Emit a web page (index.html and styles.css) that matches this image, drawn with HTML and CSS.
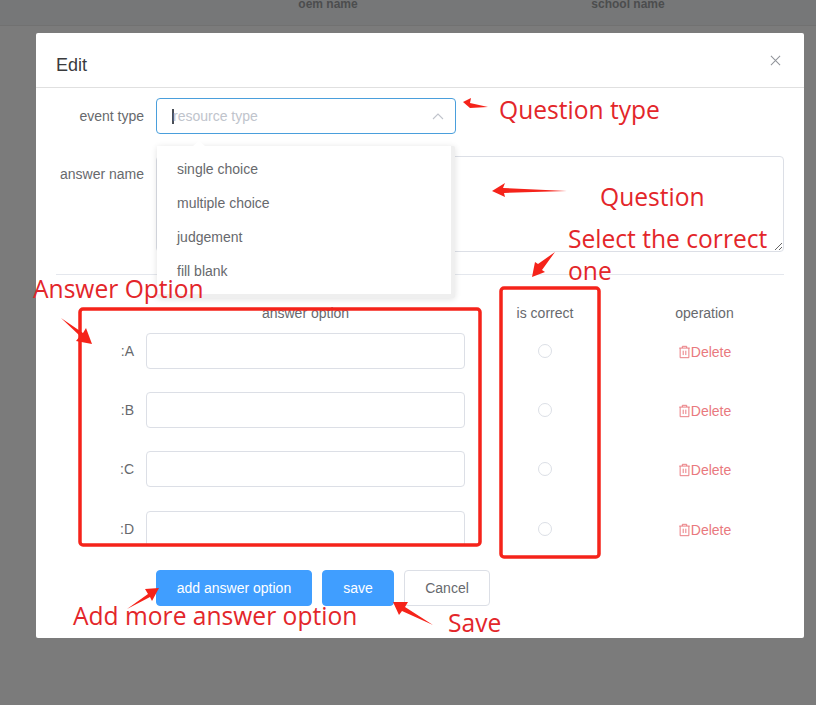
FILE: index.html
```html
<!DOCTYPE html>
<html lang="en">
<head>
    <meta charset="UTF-8">
    <title>Edit</title>
    <link rel="stylesheet" href="styles.css">
</head>
<body>
    <!-- Page behind the dialog -->
    <div class="page-head">
        <div class="page-cell">oem name</div>
        <div class="page-cell">school name</div>
    </div>

    <!-- Dialog -->
    <div class="dialog">
        <div class="dialog-header">
            <span class="dialog-title">Edit</span>
            <svg class="dialog-close" viewBox="0 0 12 12"><path d="M1 1L11 11M11 1L1 11"/></svg>
        </div>
        <div class="dialog-body">
            <div class="form-row">
                <label class="form-label">event type</label>
                <div class="select">
                    <span class="select-caret"></span>
                    <span class="select-placeholder">resource type</span>
                    <svg class="select-arrow" viewBox="0 0 12 8"><path d="M1 7L6 2L11 7"/></svg>
                </div>
            </div>
            <div class="form-row">
                <label class="form-label">answer name</label>
                <textarea class="question-input"></textarea>
            </div>
            <div class="divider"></div>

            <div class="option-table">
                <div class="option-head">
                    <div></div>
                    <div class="cell-center">answer option</div>
                    <div class="cell-center">is correct</div>
                    <div class="cell-center">operation</div>
                </div>
                <div class="option-row">
                    <div class="option-letter">:A</div>
                    <input class="option-input" type="text">
                    <div class="radio-cell"><span class="radio"></span></div>
                    <div class="delete-cell"><svg class="trash" viewBox="0 0 14 16"><path d="M1 3.5H13M4.5 3.5V1.5H9.5V3.5M2 3.5V14.5H12V3.5M5.5 6.5V11.5M8.5 6.5V11.5"/></svg>Delete</div>
                </div>
                <div class="option-row">
                    <div class="option-letter">:B</div>
                    <input class="option-input" type="text">
                    <div class="radio-cell"><span class="radio"></span></div>
                    <div class="delete-cell"><svg class="trash" viewBox="0 0 14 16"><path d="M1 3.5H13M4.5 3.5V1.5H9.5V3.5M2 3.5V14.5H12V3.5M5.5 6.5V11.5M8.5 6.5V11.5"/></svg>Delete</div>
                </div>
                <div class="option-row">
                    <div class="option-letter">:C</div>
                    <input class="option-input" type="text">
                    <div class="radio-cell"><span class="radio"></span></div>
                    <div class="delete-cell"><svg class="trash" viewBox="0 0 14 16"><path d="M1 3.5H13M4.5 3.5V1.5H9.5V3.5M2 3.5V14.5H12V3.5M5.5 6.5V11.5M8.5 6.5V11.5"/></svg>Delete</div>
                </div>
                <div class="option-row">
                    <div class="option-letter">:D</div>
                    <input class="option-input" type="text">
                    <div class="radio-cell"><span class="radio"></span></div>
                    <div class="delete-cell"><svg class="trash" viewBox="0 0 14 16"><path d="M1 3.5H13M4.5 3.5V1.5H9.5V3.5M2 3.5V14.5H12V3.5M5.5 6.5V11.5M8.5 6.5V11.5"/></svg>Delete</div>
                </div>
            </div>

            <div class="button-row">
                <button class="btn btn-primary btn-add">add answer option</button>
                <button class="btn btn-primary btn-save">save</button>
                <button class="btn btn-cancel">Cancel</button>
            </div>
        </div>
    </div>

    <!-- Select dropdown -->
    <div class="dropdown">
        <div class="dropdown-list">
            <div class="dropdown-item">single choice</div>
            <div class="dropdown-item">multiple choice</div>
            <div class="dropdown-item">judgement</div>
            <div class="dropdown-item">fill blank</div>
        </div>
    </div>

    <!-- Red annotations drawn over the screenshot -->
    <svg class="marks" viewBox="0 0 816 705">
        <rect class="mark-box" x="80" y="309" width="400" height="236" rx="3"/>
        <rect class="mark-box" x="501" y="288" width="98" height="269" rx="3"/>
        <polygon class="mark-arrow" points="463,102 471,98 470,103 488,107 470,108"/>
        <polygon class="mark-arrow" points="492,191 505,183 503,188 567,191 504,193 505,197"/>
        <polygon class="mark-arrow" points="555,252 538,264 535,262 532,277 545,272 542,270"/>
        <polygon class="mark-arrow" points="61,318 83,333 86,328 92,344 76,341 80,336"/>
        <polygon class="mark-arrow" points="127,609 148,594 145,589 159,588 152,601 150,597"/>
        <polygon class="mark-arrow" points="433,625 405,607 408,602 393,602 399,615 402,611"/>
    </svg>
    <div class="note note-type">Question type</div>
    <div class="note note-question">Question</div>
    <div class="note note-correct">Select the correct<br>one</div>
    <div class="note note-option">Answer Option</div>
    <div class="note note-add">Add more answer option</div>
    <div class="note note-save">Save</div>
</body>
</html>
```

FILE: styles.css
```css
* {
    margin: 0;
    padding: 0;
    box-sizing: border-box;
}

body {
    position: relative;
    width: 816px;
    height: 705px;
    overflow: hidden;
    background: #7b7b7b;
    color: #67696d;
    font-family: "Liberation Sans", Arial, sans-serif;
    font-size: 14px;
}

/* Page behind the dialog */
.page-head {
    display: flex;
    height: 26px;
    padding-left: 178px;
    background: #767778;
    border-bottom: 1px solid #717171;
}

.page-cell {
    width: 300px;
    margin-top: -5px;
    line-height: 18px;
    text-align: center;
    font-size: 12px;
    font-weight: bold;
    color: #4c4d4e;
}

/* Dialog */
.dialog {
    width: 768px;
    height: 605px;
    margin: 7px 0 0 36px;
    background: #fff;
    border-radius: 2px;
}

.dialog-header {
    display: flex;
    justify-content: space-between;
    height: 55px;
    padding: 20px 23px 0 20px;
    border-bottom: 1px solid #e0e0e0;
}

.dialog-title {
    font-size: 18px;
    line-height: 24px;
    color: #3a3b3d;
}

.dialog-close {
    width: 11px;
    height: 11px;
    margin-top: 2px;
    fill: none;
    stroke: #909399;
    stroke-width: 1.1;
}

.dialog-body {
    padding: 10px 20px 0;
}

.form-row {
    display: flex;
    margin-bottom: 22px;
}

.form-label {
    width: 100px;
    padding-right: 12px;
    text-align: right;
    line-height: 36px;
}

.select {
    position: relative;
    display: flex;
    align-items: center;
    width: 300px;
    height: 36px;
    padding: 0 15px;
    border: 1px solid #4a9fdc;
    border-radius: 4px;
}

.select-caret {
    width: 2px;
    height: 15px;
    margin-right: -1px;
    background: #4a4f57;
}

.select-placeholder {
    color: #c0c4cc;
}

.select-arrow {
    position: absolute;
    top: 13px;
    right: 11px;
    width: 12px;
    height: 8px;
    fill: none;
    stroke: #c0c4cc;
    stroke-width: 1.1;
}

.question-input {
    flex: 1;
    height: 96px;
    border: 1px solid #dcdfe6;
    border-radius: 4px;
    outline: none;
    display: block;
}

.divider {
    border-top: 1px solid #e4e7ed;
}

/* Answer options */
.option-table {
    height: 269px;
    padding-top: 28px;
    overflow: hidden;
}

.option-head,
.option-row {
    display: grid;
    grid-template-columns: 90px 319px 160px 159px;
    align-items: center;
}

.option-head {
    height: 20px;
    margin-bottom: 10px;
}

.option-row {
    height: 36px;
    margin-bottom: 23.2px;
}

.cell-center {
    text-align: center;
}

.option-letter {
    padding-right: 12px;
    text-align: right;
}

.option-input {
    height: 36px;
    border: 1px solid #dcdfe6;
    border-radius: 4px;
    outline: none;
}

.radio-cell {
    display: flex;
    justify-content: center;
}

.radio {
    width: 14px;
    height: 14px;
    border: 1px solid #dcdfe6;
    border-radius: 50%;
}

.delete-cell {
    display: flex;
    justify-content: center;
    align-items: center;
    padding-top: 2px;
    color: #e9797e;
}

.trash {
    width: 13px;
    height: 14px;
    fill: none;
    stroke: #e9797e;
    stroke-width: 1.1;
}

/* Buttons */
.button-row {
    display: flex;
    gap: 10px;
    margin-top: 26px;
    padding-left: 100px;
}

.btn {
    height: 36px;
    border: 1px solid #dcdfe6;
    border-radius: 4px;
    background: #fff;
    color: #67696d;
    font-family: inherit;
    font-size: 14px;
}

.btn-primary {
    border-color: #409eff;
    background: #409eff;
    color: #fff;
}

.btn-add {
    width: 156px;
}

.btn-save {
    width: 72px;
}

.btn-cancel {
    width: 86px;
}

/* Select dropdown */
.dropdown {
    position: absolute;
    top: 146px;
    left: 157px;
    width: 298px;
    height: 152px;
    background: #efefef;
    border-radius: 2px;
    box-shadow: 0 1px 6px rgba(0, 0, 0, 0.12);
}

.dropdown::before {
    content: "";
    position: absolute;
    top: -5px;
    left: 36px;
    border-left: 6px solid transparent;
    border-right: 6px solid transparent;
    border-bottom: 5px solid #fff;
}

.dropdown-list {
    width: 294px;
    height: 148px;
    padding-top: 6px;
    overflow: hidden;
    background: #fff;
}

.dropdown-item {
    height: 34px;
    padding-left: 20px;
    line-height: 34px;
}

/* Annotations */
.marks {
    position: absolute;
    top: 0;
    left: 0;
    width: 816px;
    height: 705px;
}

.mark-box {
    fill: none;
    stroke: #f5231a;
    stroke-width: 3.5;
}

.mark-arrow {
    fill: #f5231a;
}

.note {
    position: absolute;
    color: #e3262a;
    font-family: "Open Sans", sans-serif;
    font-size: 24.6px;
    line-height: 32px;
    white-space: nowrap;
}

.note-type {
    top: 94px;
    left: 499px;
}

.note-question {
    top: 181px;
    left: 600px;
}

.note-correct {
    top: 223px;
    left: 568px;
}

.note-option {
    top: 273px;
    left: 33px;
}

.note-add {
    top: 600px;
    left: 73px;
}

.note-save {
    top: 607px;
    left: 448px;
}
```
